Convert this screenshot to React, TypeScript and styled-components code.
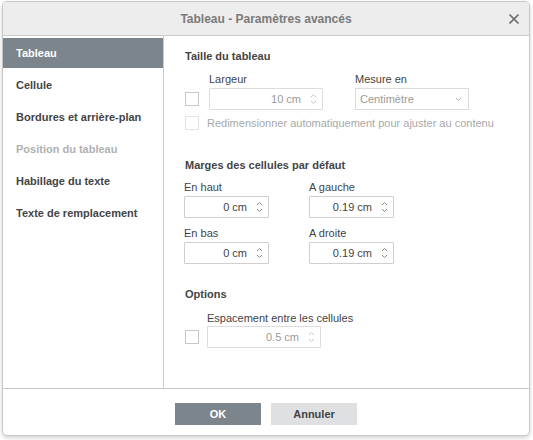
import React from 'react';
import styled, { createGlobalStyle } from 'styled-components';

const GlobalStyle = createGlobalStyle`
  html, body {
    margin: 0;
    padding: 0;
    background: #f3f3f3;
    font-family: 'Liberation Sans', Arial, sans-serif;
    font-size: 11px;
    color: #444444;
  }
`;

const menuItems = [
  { label: 'Tableau', active: true },
  { label: 'Cellule' },
  { label: 'Bordures et arrière-plan' },
  { label: 'Position du tableau', disabled: true },
  { label: 'Habillage du texte' },
  { label: 'Texte de remplacement' },
];

const SpinArrows: React.FC<{ $faded?: boolean }> = ({ $faded }) => (
  <ArrowBox $faded={$faded}>
    <svg width="7" height="14" viewBox="0 0 7 14">
      <path d="M1 5 L3.5 2.5 L6 5" fill="none" stroke="currentColor" strokeWidth="1" />
      <path d="M1 9 L3.5 11.5 L6 9" fill="none" stroke="currentColor" strokeWidth="1" />
    </svg>
  </ArrowBox>
);

const SpinInput: React.FC<{ value: string; width: number; disabled?: boolean }> = ({
  value,
  width,
  disabled,
}) => (
  <Spin style={{ width }} $disabled={disabled}>
    <SpinValue>{value}</SpinValue>
    <SpinArrows $faded={disabled} />
  </Spin>
);

const App: React.FC = () => {
  return (
    <>
      <GlobalStyle />
      <Page>
        <Dialog>
          <Header>
            <Title>Tableau - Paramètres avancés</Title>
            <CloseButton>
              <svg width="10" height="10" viewBox="0 0 10 10">
                <path d="M0.5 0.5 L9.5 9.5 M9.5 0.5 L0.5 9.5" stroke="#707070" strokeWidth="1.6" />
              </svg>
            </CloseButton>
          </Header>

          <Body>
            <Sidebar>
              {menuItems.map((item) => (
                <MenuItem key={item.label} $active={item.active} $disabled={item.disabled}>
                  {item.label}
                </MenuItem>
              ))}
            </Sidebar>

            <Content>
              <SectionTitle>Taille du tableau</SectionTitle>
              <SizeRow>
                <CheckBox />
                <Field>
                  <Label>Largeur</Label>
                  <SpinInput value="10 cm" width={114} disabled />
                </Field>
                <Field>
                  <Label>Mesure en</Label>
                  <Select>
                    <span>Centimètre</span>
                    <svg width="7" height="5" viewBox="0 0 7 5">
                      <path d="M1 1 L3.5 3.5 L6 1" fill="none" stroke="#b5b5b5" strokeWidth="1" />
                    </svg>
                  </Select>
                </Field>
              </SizeRow>
              <CheckRow>
                <CheckBox $faded />
                <DisabledText>Redimensionner automatiquement pour ajuster au contenu</DisabledText>
              </CheckRow>

              <SectionTitle $top={28}>Marges des cellules par défaut</SectionTitle>
              <MarginGrid>
                <Field>
                  <Label>En haut</Label>
                  <SpinInput value="0 cm" width={85} />
                </Field>
                <Field>
                  <Label>A gauche</Label>
                  <SpinInput value="0.19 cm" width={85} />
                </Field>
                <Field>
                  <Label>En bas</Label>
                  <SpinInput value="0 cm" width={85} />
                </Field>
                <Field>
                  <Label>A droite</Label>
                  <SpinInput value="0.19 cm" width={85} />
                </Field>
              </MarginGrid>

              <SectionTitle $top={23}>Options</SectionTitle>
              <OptionRow>
                <CheckBox />
                <Field>
                  <Label $tight>Espacement entre les cellules</Label>
                  <SpinInput value="0.5 cm" width={114} disabled />
                </Field>
              </OptionRow>
            </Content>
          </Body>

          <Footer>
            <Button $primary>OK</Button>
            <Button>Annuler</Button>
          </Footer>
        </Dialog>
      </Page>
    </>
  );
};

export default App;

// Styled Components
const Page = styled.div`
  width: 533px;
  height: 440px;
  padding: 1px 0 0 2px;
  box-sizing: border-box;
  background: #ffffff;
`;

const Dialog = styled.div`
  width: 528px;
  height: 435px;
  box-sizing: border-box;
  border: 1px solid #c8c8c8;
  border-radius: 5px;
  background: #ffffff;
  box-shadow: 0 2px 4px rgba(0, 0, 0, 0.18);
  display: flex;
  flex-direction: column;
  overflow: hidden;
`;

const Header = styled.div`
  height: 34px;
  flex: none;
  box-sizing: border-box;
  background: #ededed;
  border-bottom: 1px solid #cbcbcb;
  display: flex;
  align-items: center;
  justify-content: center;
  position: relative;
`;

const Title = styled.div`
  font-size: 12px;
  font-weight: bold;
  color: #7a7a7a;
`;

const CloseButton = styled.div`
  position: absolute;
  right: 10px;
  top: 12px;
  width: 10px;
  height: 10px;
  display: flex;
`;

const Body = styled.div`
  display: flex;
  height: 352px;
  flex: none;
  border-bottom: 1px solid #cbcbcb;
`;

const Sidebar = styled.div`
  width: 160px;
  flex: none;
  border-right: 1px solid #cbcbcb;
  padding-top: 2px;
  display: flex;
  flex-direction: column;
  gap: 2px;
`;

const MenuItem = styled.div<{ $active?: boolean; $disabled?: boolean }>`
  height: 30px;
  line-height: 30px;
  padding-left: 13px;
  font-weight: bold;
  font-size: 11px;
  background: ${(p) => (p.$active ? '#7d858c' : 'transparent')};
  color: ${(p) => (p.$active ? '#ffffff' : p.$disabled ? '#b0b0b0' : '#444444')};
`;

const Content = styled.div`
  flex: 1;
  padding: 13px 0 0 21px;
  display: flex;
  flex-direction: column;
`;

const SectionTitle = styled.div<{ $top?: number }>`
  font-weight: bold;
  line-height: 14px;
  color: #444444;
  margin-top: ${(p) => p.$top ?? 0}px;
`;

const SizeRow = styled.div`
  display: flex;
  align-items: flex-end;
  margin-top: 9px;

  & > div:nth-child(3) {
    margin-left: 32px;
  }
`;

const Field = styled.div`
  display: flex;
  flex-direction: column;
`;

const Label = styled.div<{ $tight?: boolean }>`
  line-height: 14px;
  margin-bottom: ${(p) => (p.$tight ? 1 : 2)}px;
  color: #444444;
`;

const CheckBox = styled.div<{ $faded?: boolean }>`
  width: 12px;
  height: 12px;
  flex: none;
  border: 1px solid ${(p) => (p.$faded ? '#e2e2e2' : '#c8c8c8')};
  background: #ffffff;
  margin: 0 10px 4px 0;
`;

const Spin = styled.div<{ $disabled?: boolean }>`
  height: 22px;
  box-sizing: border-box;
  border: 1px solid ${(p) => (p.$disabled ? '#dcdcdc' : '#cfcfcf')};
  border-radius: 1px;
  display: flex;
  align-items: center;
  justify-content: flex-end;
  padding-right: 5px;
  color: ${(p) => (p.$disabled ? '#9a9a9a' : '#444444')};
`;

const SpinValue = styled.span`
  margin-right: 9px;
`;

const ArrowBox = styled.span<{ $faded?: boolean }>`
  display: flex;
  color: ${(p) => (p.$faded ? '#c8c8c8' : '#8a8a8a')};
`;

const Select = styled.div`
  width: 114px;
  height: 22px;
  box-sizing: border-box;
  border: 1px solid #dcdcdc;
  display: flex;
  align-items: center;
  justify-content: space-between;
  padding: 0 6px 0 4px;
  color: #9a9a9a;
`;

const CheckRow = styled.div`
  display: flex;
  align-items: center;
  margin-top: 6px;

  & > div {
    margin: 0 8px 0 0;
  }
`;

const DisabledText = styled.span`
  color: #a8a8a8;
`;

const MarginGrid = styled.div`
  display: grid;
  grid-template-columns: 85px 85px;
  column-gap: 40px;
  row-gap: 8px;
  margin-top: 8px;
  margin-left: -1px;
`;

const OptionRow = styled.div`
  display: flex;
  align-items: flex-end;
  margin-top: 10px;

  & > div:first-child {
    margin-right: 8px;
  }
`;

const Footer = styled.div`
  flex: 1;
  display: flex;
  justify-content: center;
  gap: 10px;
  padding-top: 14px;
`;

const Button = styled.div<{ $primary?: boolean }>`
  width: 86px;
  height: 22px;
  line-height: 22px;
  text-align: center;
  font-weight: bold;
  font-size: 11px;
  background: ${(p) => (p.$primary ? '#7d858c' : '#dfe0e2')};
  color: ${(p) => (p.$primary ? '#ffffff' : '#444444')};
`;
